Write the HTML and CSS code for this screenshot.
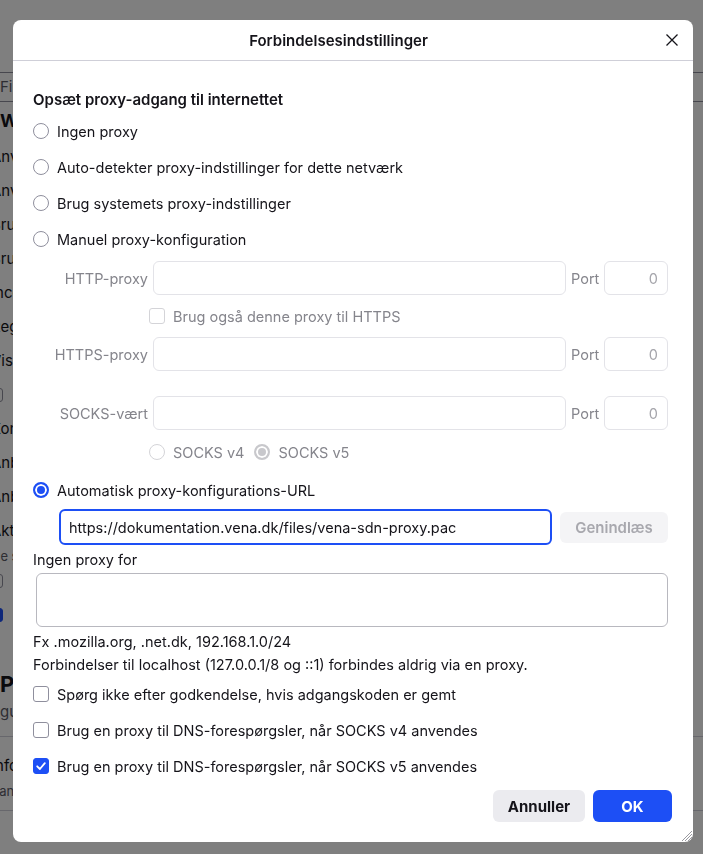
FILE: index.html
```html
<!DOCTYPE html>
<html>

<head>
    <title>Forbindelsesindstillinger</title>
    <link rel="stylesheet" href="styles.css">
</head>

<body>
    <!-- settings page behind the dialog -->
    <div class="page">
        <div class="search">Find i indstillinger</div>
        <div class="page-heading">Websteder</div>
        <div class="page-row cut">Anvend systemets tema</div>
        <div class="page-row cut">Anvend standardskrifttype</div>
        <div class="page-row cut">Brug autorulning</div>
        <div class="page-row cut">Brug jævn rulning</div>
        <div class="page-row cut">Incognito-vinduer</div>
        <div class="page-row cut">Regler for sprog</div>
        <div class="page-row cut">Vis altid rullebjælker</div>
        <div class="page-row"><span class="page-check"></span></div>
        <div class="page-row cut">Kontrol af stavning</div>
        <div class="page-row cut">Anbefal udvidelser</div>
        <div class="page-row cut">Anbefal funktioner</div>
        <div class="page-row cut">Aktiver billede-i-billede</div>
        <div class="page-note cut">De seneste indstillinger</div>
        <div class="page-row"><span class="page-check"></span></div>
        <div class="page-row"><span class="page-check checked"></span></div>
        <div class="page-title">Præstation</div>
        <div class="page-note big">gunstige indstillinger</div>
        <div class="page-line"></div>
        <div class="page-row cut">Info om netværk</div>
        <div class="page-note cut">Vandig tekst</div>
        <div class="page-line"></div>
    </div>

    <div class="backdrop">
        <div class="dialog">
            <div class="dialog-header">
                <div class="dialog-title">Forbindelsesindstillinger</div>
                <button class="close-button">
                    <svg width="12" height="12" viewBox="0 0 12 12">
                        <path d="M0.5 0.5 L11.5 11.5 M11.5 0.5 L0.5 11.5" stroke="#15141a" stroke-width="1.3" fill="none" />
                    </svg>
                </button>
            </div>

            <div class="dialog-body">
                <div class="section-title">Opsæt proxy-adgang til internettet</div>

                <div class="option first"><span class="radio"></span>Ingen proxy</div>
                <div class="option"><span class="radio"></span>Auto-detekter proxy-indstillinger for dette netværk</div>
                <div class="option"><span class="radio"></span>Brug systemets proxy-indstillinger</div>
                <div class="option"><span class="radio"></span>Manuel proxy-konfiguration</div>

                <div class="manual">
                    <div class="field-row">
                        <span class="field-label">HTTP-proxy</span>
                        <input class="text-input" disabled>
                        <span class="port-label">Port</span>
                        <input class="port-input" value="0" disabled>
                    </div>
                    <div class="https-row">
                        <span class="checkbox disabled"></span>Brug også denne proxy til HTTPS
                    </div>
                    <div class="field-row">
                        <span class="field-label">HTTPS-proxy</span>
                        <input class="text-input" disabled>
                        <span class="port-label">Port</span>
                        <input class="port-input" value="0" disabled>
                    </div>
                    <div class="field-row socks">
                        <span class="field-label">SOCKS-vært</span>
                        <input class="text-input" disabled>
                        <span class="port-label">Port</span>
                        <input class="port-input" value="0" disabled>
                    </div>
                    <div class="socks-row">
                        <span class="radio disabled"></span>SOCKS v4
                        <span class="radio disabled checked v5"></span>SOCKS v5
                    </div>
                </div>

                <div class="option auto"><span class="radio checked"></span>Automatisk proxy-konfigurations-URL</div>
                <div class="url-row">
                    <input class="url-input" value="https://dokumentation.vena.dk/files/vena-sdn-proxy.pac">
                    <button class="reload-button" disabled>Genindlæs</button>
                </div>

                <div class="no-proxy-label">Ingen proxy for</div>
                <textarea class="no-proxy"></textarea>
                <div class="hint first-hint">Fx .mozilla.org, .net.dk, 192.168.1.0/24</div>
                <div class="hint">Forbindelser til localhost (127.0.0.1/8 og ::1) forbindes aldrig via en proxy.</div>

                <div class="option"><span class="checkbox"></span>Spørg ikke efter godkendelse, hvis adgangskoden er gemt</div>
                <div class="option"><span class="checkbox"></span>Brug en proxy til DNS-forespørgsler, når SOCKS v4 anvendes</div>
                <div class="option">
                    <span class="checkbox checked">
                        <svg width="12" height="12" viewBox="0 0 12 12">
                            <path d="M2.2 6.3 L4.9 9 L9.8 3.2" stroke="#fff" stroke-width="1.8" fill="none" stroke-linecap="round" stroke-linejoin="round" />
                        </svg>
                    </span>Brug en proxy til DNS-forespørgsler, når SOCKS v5 anvendes
                </div>

                <div class="buttons">
                    <button class="button cancel">Annuller</button>
                    <button class="button primary">OK</button>
                </div>
            </div>

            <svg class="grip" width="14" height="14" viewBox="0 0 14 14">
                <path d="M13 3 L3 13 M13 6 L6 13 M13 9 L9 13 M13 12 L12 13" stroke="#9a9aa0" stroke-width="1" fill="none" />
            </svg>
        </div>
    </div>
</body>

</html>
```

FILE: styles.css
```css
* {
    margin: 0;
    padding: 0;
    box-sizing: border-box;
}

body {
    width: 703px;
    height: 854px;
    overflow: hidden;
    background: #fff;
    color: #15141a;
    font-family: "Inter", "Noto Sans", sans-serif;
    font-size: 14.5px;
}

/* page behind the dialog */

.page {
    padding-top: 72px;
    white-space: nowrap;
}

.search {
    height: 30px;
    line-height: 28px;
    border-top: 1px solid #8f8f9d;
    border-bottom: 1px solid #8f8f9d;
    color: #5b5b66;
    font-size: 15px;
}

.page-heading {
    height: 24px;
    line-height: 24px;
    margin: 7px 0 7px;
    font-size: 18px;
    font-weight: 700;
}

.page-row {
    height: 34px;
    line-height: 34px;
    font-size: 15px;
    display: flex;
    align-items: center;
}

.cut {
    margin-left: -9px;
}

.page-note {
    height: 16px;
    line-height: 16px;
    font-size: 13px;
    color: #5b5b66;
}

.page-note.big {
    height: 26px;
    line-height: 26px;
    font-size: 15px;
}

.page-check {
    width: 14px;
    height: 14px;
    margin-left: -11px;
    border: 1px solid #8f8f9d;
    border-radius: 3px;
}

.page-check.checked {
    background: #1d4ff5;
    border-color: #1d4ff5;
}

.page-title {
    height: 30px;
    line-height: 30px;
    margin-top: 37px;
    font-size: 22px;
    font-weight: 700;
}

.page-line {
    height: 1px;
    margin: 11px 0 12px;
    background: #cfcfd8;
}

/* dialog */

.backdrop {
    position: fixed;
    inset: 0;
    background: rgba(0, 0, 0, 0.5);
    padding: 20px 10px 12px 13px;
}

.dialog {
    position: relative;
    width: 680px;
    height: 822px;
    background: #fff;
    border-radius: 8px;
    display: flex;
    flex-direction: column;
    overflow: hidden;
}

.dialog-header {
    height: 41px;
    border-bottom: 1px solid #cfcfd8;
    display: flex;
    align-items: center;
}

.dialog-title {
    flex: 1;
    text-align: center;
    font-size: 15px;
    font-weight: 600;
}

.close-button {
    width: 16px;
    height: 16px;
    margin-right: 13px;
    border: none;
    background: none;
    display: flex;
    align-items: center;
    justify-content: center;
}

.dialog-body {
    flex: 1;
    padding: 29px 25px 20px 20px;
    display: flex;
    flex-direction: column;
}

.section-title {
    height: 20px;
    line-height: 20px;
    font-size: 15px;
    font-weight: 600;
}

.option {
    height: 36px;
    display: flex;
    align-items: center;
    gap: 8px;
}

.option.first {
    margin-top: 3px;
}

.option.auto {
    margin-top: 8px;
}

.radio {
    flex: none;
    width: 16px;
    height: 16px;
    border: 1px solid #8f8f9d;
    border-radius: 50%;
    background: #fff;
}

.radio.checked {
    border: 2px solid #1d4ff5;
    background: #1d4ff5;
    box-shadow: inset 0 0 0 2px #fff;
}

.radio.disabled {
    border-color: #d4d4d8;
}

.radio.disabled.checked {
    border: 2px solid #c8c8cc;
    background: #c8c8cc;
    box-shadow: inset 0 0 0 2px #fff;
}

.checkbox {
    flex: none;
    width: 16px;
    height: 16px;
    border: 1px solid #8f8f9d;
    border-radius: 3px;
    background: #fff;
    display: flex;
    align-items: center;
    justify-content: center;
}

.checkbox.disabled {
    border-color: #d4d4d8;
}

.checkbox.checked {
    border-color: #1d4ff5;
    background: #1d4ff5;
}

/* manual proxy fields */

.manual {
    margin-top: 4px;
    display: flex;
    flex-direction: column;
    color: #85858c;
}

.field-row {
    height: 34px;
    display: flex;
    align-items: center;
    gap: 5px;
}

.field-row.socks {
    margin-top: 25px;
}

.field-label {
    width: 115px;
    text-align: right;
}

.text-input,
.port-input {
    height: 34px;
    border: 1px solid #e3e3e8;
    border-radius: 6px;
    background: #fff;
    font: inherit;
    color: #a5a5ab;
}

.text-input {
    flex: 1;
    min-width: 0;
}

.port-label {
    width: 28px;
}

.port-input {
    width: 64px;
    text-align: right;
    padding-right: 9px;
}

.https-row {
    height: 42px;
    margin-left: 116px;
    display: flex;
    align-items: center;
    gap: 8px;
}

.socks-row {
    height: 24px;
    margin: 10px 0 0 116px;
    display: flex;
    align-items: center;
    gap: 8px;
}

.radio.v5 {
    margin-left: 2px;
}

/* automatic config */

.url-row {
    margin: 1px 0 0 26px;
    display: flex;
    align-items: center;
    gap: 8px;
}

.url-input {
    flex: 1;
    min-width: 0;
    height: 36px;
    padding-left: 8px;
    border: 2px solid #1d4ff5;
    border-radius: 6px;
    font: inherit;
    color: #15141a;
    outline: none;
}

.reload-button {
    width: 108px;
    height: 31px;
    border: none;
    border-radius: 6px;
    background: #f4f4f6;
    color: #a8a8ae;
    font: inherit;
    font-size: 15px;
    font-weight: 600;
}

.no-proxy-label {
    height: 20px;
    line-height: 20px;
    margin-top: 5px;
}

.no-proxy {
    height: 54px;
    margin: 3px 0 0 3px;
    border: 1px solid #b8b8bf;
    border-radius: 6px;
    resize: none;
    font: inherit;
}

.hint {
    height: 23px;
    line-height: 23px;
}

.first-hint {
    margin-top: 3px;
}

/* footer buttons */

.buttons {
    margin: auto -4px 0 0;
    display: flex;
    justify-content: flex-end;
    gap: 8px;
}

.button {
    height: 32px;
    border: none;
    border-radius: 6px;
    font: inherit;
    font-size: 15px;
    font-weight: 700;
}

.button.cancel {
    width: 92px;
    background: #ebebef;
    color: #15141a;
}

.button.primary {
    width: 79px;
    background: #1d4ff5;
    color: #fff;
}

.grip {
    position: absolute;
    right: 0;
    bottom: 0;
}
```
